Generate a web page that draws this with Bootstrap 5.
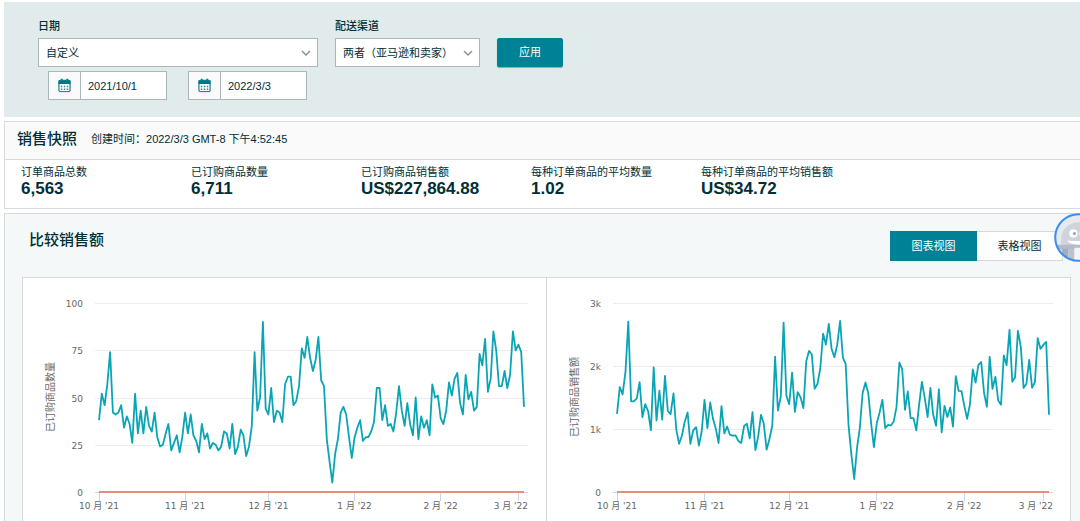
<!DOCTYPE html>
<html lang="zh-CN">
<head>
<meta charset="utf-8">
<meta name="viewport" content="width=device-width, initial-scale=1">
<title>销售控制面板</title>
<link href="https://cdn.jsdelivr.net/npm/bootstrap@5.3.0/dist/css/bootstrap.min.css" rel="stylesheet">
<style>
  :root { --ink: #002f36; --teal: #008296; --line: #d5dbdb; }
  body { font-family: "Liberation Sans", "Noto Sans CJK SC", sans-serif; font-size: 11px; line-height: 16px; color: var(--ink); background: #fff; }
  .page { padding: 2px 0 0 4px; gap: 4px; overflow: hidden; }
  .filters { background: #e1ebeb; padding: 16px 34px 17px; min-height: 115px; column-gap: 17px; }
  .filters label { display: block; font-weight: 500; margin-bottom: 4px; }
  .filters .form-select, .filters .form-control, .filters .input-group-text { font-size: 11px; line-height: 16px; color: var(--ink); border: 1px solid #aab7b8; border-radius: 0; }
  .filters .form-select { height: 29px; padding: 0 24px 0 7px; background-position: right 6px center; background-size: 10px 10px;
    background-image: url("data:image/svg+xml,%3csvg xmlns='http://www.w3.org/2000/svg' viewBox='0 0 10 10'%3e%3cpath fill='none' stroke='%23879596' stroke-width='1.5' d='M1 3l4 4 4-4'/%3e%3c/svg%3e"); }
  .sel-date { width: 280px; }
  .sel-channel { width: 145px; }
  .dates { gap: 21px; padding: 4px 10px 0; }
  .date-box { width: 119px; height: 29px; }
  .date-box .input-group-text { width: 33px; padding: 0 9px; background: #fafafa; }
  .date-box .form-control { padding: 0 7px; min-height: 0; }
  .btn-apply { width: 66px; height: 29px; margin-top: 20px; padding: 0; font-size: 11px; color: #fff; background: var(--teal); border: 1px solid var(--teal); border-radius: 2px; box-shadow: 0 1px 1px #8fa9ac; }
  .btn-apply:hover { color: #fff; background: #006f80; }
  .panel { border: 1px solid var(--line); border-right: 0; }
  .panel h2 { font-size: 15px; line-height: 20px; font-weight: 500; margin: 0; }
  .snap-head { background: #fafafa; border-bottom: 1px solid var(--line); height: 38px; padding: 0 12px 4px; gap: 14px; }
  .stats { padding: 4px 16px 10px; }
  .stat { width: 170px; flex: none; }
  .stat dt { font-weight: 400; line-height: 16px; }
  .stat dd { font-size: 17px; line-height: 18px; font-weight: 700; margin: 0; }
  .compare { background: #f4f8f8; border-bottom: 0; padding: 16px 9px 0 17px; }
  .compare-head { padding: 0 8px 17px 7px; height: 47px; }
  .view-toggle { margin-top: 1px; height: 30px; }
  .view-toggle .btn { width: 87px; font-size: 11px; padding: 0; border-radius: 0; color: var(--ink); background: #fff; border: 1px solid var(--line); }
  .view-toggle .btn.active { color: #fff; background: var(--teal); border-color: var(--teal); }
  .charts { background: #fff; border: 1px solid var(--line); border-bottom: 0; }
  .chart-cell + .chart-cell { border-left: 1px solid var(--line); }
  .chart-cell svg { display: block; width: 100%; height: 242px; }
  .chart-cell text { font-family: "DejaVu Sans", "Noto Sans CJK SC", sans-serif; font-size: 9px; fill: #666; }
  .chart-cell text.axis-title { font-family: "Liberation Sans", "Noto Sans CJK SC", sans-serif; font-size: 10px; }
  .helper { position: absolute; top: 213px; right: -23px; width: 49px; height: 49px; padding: 0; border: 0; background: none; }
  .helper svg { display: block; width: 100%; height: 100%; }
</style>
</head>
<body>
<main class="page position-relative d-flex flex-column min-vh-100">
  <form class="filters d-flex align-items-start">
    <div>
      <label for="range">日期</label>
      <select id="range" class="form-select sel-date"><option>自定义</option></select>
      <div class="dates d-flex">
        <div class="input-group flex-nowrap date-box">
          <label class="input-group-text d-flex m-0" for="from" aria-label="开始日期"><svg width="14" height="15" viewBox="0 0 14 15"><use href="#calendar"/></svg></label>
          <input id="from" class="form-control" type="text" value="2021/10/1">
        </div>
        <div class="input-group flex-nowrap date-box">
          <label class="input-group-text d-flex m-0" for="to" aria-label="结束日期"><svg width="14" height="15" viewBox="0 0 14 15"><use href="#calendar"/></svg></label>
          <input id="to" class="form-control" type="text" value="2022/3/3">
        </div>
      </div>
    </div>
    <div>
      <label for="channel">配送渠道</label>
      <select id="channel" class="form-select sel-channel"><option>两者（亚马逊和卖家）</option></select>
    </div>
    <button type="button" class="btn btn-apply">应用</button>
  </form>

  <section class="panel">
    <div class="snap-head d-flex align-items-center">
      <h2>销售快照</h2>
      <span>创建时间：2022/3/3 GMT-8 下午4:52:45</span>
    </div>
    <dl class="stats d-flex mb-0">
      <div class="stat"><dt>订单商品总数</dt><dd>6,563</dd></div>
      <div class="stat"><dt>已订购商品数量</dt><dd>6,711</dd></div>
      <div class="stat"><dt>已订购商品销售额</dt><dd>US$227,864.88</dd></div>
      <div class="stat"><dt>每种订单商品的平均数量</dt><dd>1.02</dd></div>
      <div class="stat"><dt>每种订单商品的平均销售额</dt><dd>US$34.72</dd></div>
    </dl>
  </section>

  <section class="panel compare flex-grow-1 d-flex flex-column">
    <div class="compare-head d-flex justify-content-between align-items-start">
      <h2>比较销售额</h2>
      <div class="btn-group view-toggle" role="group" aria-label="视图">
        <button type="button" class="btn active">图表视图</button>
        <button type="button" class="btn">表格视图</button>
      </div>
    </div>
    <div class="charts row g-0 flex-grow-1">
      <div class="col chart-cell"><svg id="units" role="img" aria-label="已订购商品数量"></svg></div>
      <div class="col chart-cell"><svg id="sales" role="img" aria-label="已订购商品销售额"></svg></div>
    </div>
  </section>

  <button type="button" class="helper" aria-label="帮助">
    <svg viewBox="0 0 48 48">
      <defs><clipPath id="disc"><circle cx="24" cy="24" r="22.5"/></clipPath></defs>
      <circle cx="24" cy="24" r="22.5" fill="#e6e9ef"/>
      <g clip-path="url(#disc)">
        <path d="M7 32V25a17 16 0 0 1 34 0v7z" fill="#cfd3dc"/>
        <path d="M3 31h42v5H3z" fill="#b4bac6"/>
        <path d="M8 35h6v13H8zM34 35h6v13h-6z" fill="#a5acb9"/>
        <path d="M14 36h6v12h-6zM28 36h6v12h-6z" fill="#bcc2cd"/>
        <path d="M20 34h8v14h-8z" fill="#f2f4f7"/>
        <path d="M13 27q11 1 22 0-2 4-11 4t-11-4z" fill="#fff"/>
        <circle cx="19" cy="20" r="4" fill="#fff"/><circle cx="29" cy="20" r="4" fill="#fff"/>
        <circle cx="20" cy="20" r="1.5" fill="#9aa2af"/><circle cx="28" cy="20" r="1.5" fill="#9aa2af"/>
      </g>
      <circle cx="24" cy="24" r="22.8" fill="none" stroke="#3b8df2" stroke-width="2"/>
    </svg>
  </button>
</main>

<svg width="0" height="0" class="position-absolute" aria-hidden="true">
  <symbol id="calendar" viewBox="0 0 14 15">
    <path d="M3 0h2v2H3zM9 0h2v2H9z" fill="#00768a"/>
    <rect x="1" y="2" width="12" height="12" rx="1.5" fill="#fff" stroke="#2b8496" stroke-width="1.4"/>
    <path d="M.5 2h13v4H.5z" fill="#00768a"/>
    <path d="M3 8.5h8M3 11.5h8" stroke="#2b8496" stroke-width="1.6" stroke-dasharray="1.6 1.6"/>
  </symbol>
</svg>

<script src="https://cdn.jsdelivr.net/npm/bootstrap@5.3.0/dist/js/bootstrap.bundle.min.js"></script>
<script>
  // One value per day, 1 October 2021 to 3 March 2022
  const units = [38,52,46,57,74,42,41,42,46,34,40,36,26,52,31,43,31,45,35,32,42,29,24,25,31,36,22,26,30,21,29,
    42,31,41,30,27,21,36,28,31,23,26,25,22,24,32,31,23,36,20,24,33,30,19,24,35,74,43,50,90,44,
    41,55,37,43,42,37,57,61,61,46,48,56,76,71,82,71,64,70,82,59,56,28,16,5,20,28,42,45,41,29,18,
    29,34,38,27,29,29,32,37,55,55,38,46,35,36,32,42,56,43,35,47,36,30,50,28,40,34,38,30,57,50,51,
    39,36,43,58,51,60,63,47,41,62,49,53,43,45,73,67,81,53,60,85,75,56,56,64,55,62,85,75,78,74,45];
  const sales = [1240,1665,1550,1910,2705,1440,1440,1485,1745,1185,1395,1285,980,1980,1135,1610,1150,1845,1285,1235,1565,990,765,893,1120,1262,765,977,1030,735,960,
    1463,1014,1421,1162,1004,777,1363,930,1040,908,893,898,808,777,1050,1083,850,1268,665,882,1225,1083,671,845,1056,2150,1294,1516,2689,1527,
    1395,1896,1273,1585,1505,1331,2071,2240,2182,1638,1717,1965,2514,2340,2667,2271,2139,2335,2715,2134,2028,1067,592,206,697,1014,1569,1738,1569,1093,713,
    1093,1262,1463,1014,1067,1056,1120,1347,2055,1949,1305,1595,1173,1173,977,1384,1749,1490,1189,1653,1225,1051,1632,946,1368,1189,1342,1040,1838,1606,1600,
    1368,1162,1384,1944,1738,2018,2060,1569,1352,2145,1638,1828,1453,1384,2166,2013,2573,1749,1823,2557,2308,1653,1717,2097,1653,1743,2441,2271,2335,2383,1225];
  const months = [[0, "10 月 '21"], [31, "11 月 '21"], [61, "12 月 '21"], [92, "1 月 '22"], [123, "2 月 '22"], [151, "3 月 '22"]];

  function draw(id, data, max, ticks, title, left, right, titleX) {
    const svg = document.getElementById(id), w = svg.clientWidth;
    const top = 25, base = 214, pad = 4, end = w - right;
    const x = i => left + pad + i * (end - left - 2 * pad) / (data.length - 1);
    const y = v => base - v / max * (base - top);
    let out = "";
    ticks.forEach(([v, name]) => {
      const gy = Math.round(y(v));
      out += `<path d="M${left} ${gy}.5H${end}" stroke="${v ? "#ececec" : "#ccd6eb"}"/>`;
      out += `<text x="${left - 12}" y="${gy + 4}" text-anchor="end">${name}</text>`;
    });
    months.forEach(([i, name]) => {
      const edge = i > 150;
      out += `<path d="M${Math.floor(x(i))}.5 ${base}v9" stroke="#ccd6eb"/>`;
      out += `<text x="${edge ? end : x(i)}" y="231" text-anchor="${edge ? "end" : "middle"}">${name}</text>`;
    });
    out += `<text class="axis-title" transform="translate(${titleX} 119) rotate(-90)" text-anchor="middle">${title}</text>`;
    out += `<path d="M${x(0)} ${base}H${x(data.length - 1)}" stroke="#e98b7d" stroke-width="2"/>`;
    out += `<polyline fill="none" stroke="#0aa5b5" stroke-width="1.8" stroke-linejoin="round" points="${data.map((v, i) => x(i).toFixed(1) + "," + y(v).toFixed(1)).join(" ")}"/>`;
    svg.innerHTML = out;
  }
  function drawAll() {
    draw("units", units, 100, [[0, "0"], [25, "25"], [50, "50"], [75, "75"], [100, "100"]], "已订购商品数量", 72, 18, 31);
    draw("sales", sales, 3000, [[0, "0"], [1000, "1k"], [2000, "2k"], [3000, "3k"]], "已订购商品销售额", 66, 17, 31);
  }
  drawAll();
  window.addEventListener("resize", drawAll);
</script>
</body>
</html>
